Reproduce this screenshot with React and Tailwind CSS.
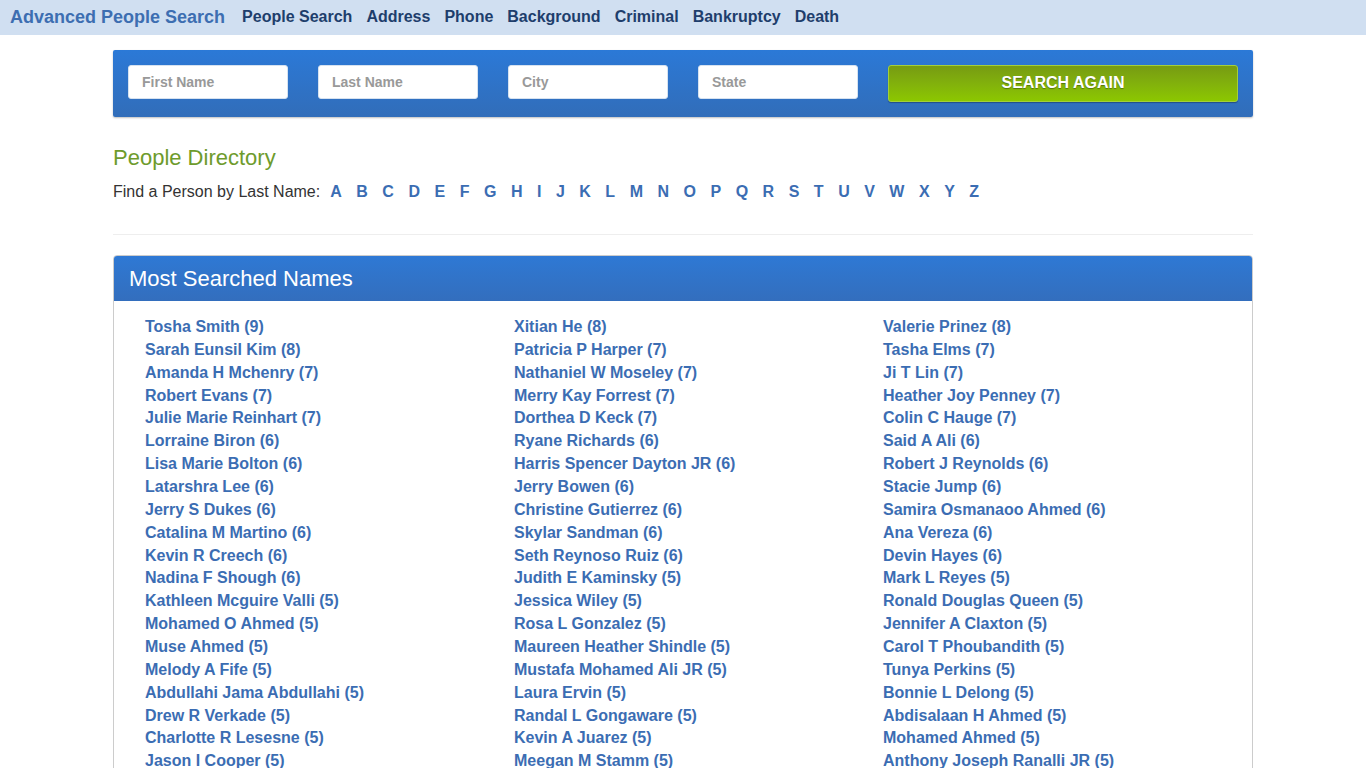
import React from 'react';

const navLinks = ['People Search', 'Address', 'Phone', 'Background', 'Criminal', 'Bankruptcy', 'Death'];

const letters = 'ABCDEFGHIJKLMNOPQRSTUVWXYZ'.split('');

const columns = [
  [
    'Tosha Smith (9)',
    'Sarah Eunsil Kim (8)',
    'Amanda H Mchenry (7)',
    'Robert Evans (7)',
    'Julie Marie Reinhart (7)',
    'Lorraine Biron (6)',
    'Lisa Marie Bolton (6)',
    'Latarshra Lee (6)',
    'Jerry S Dukes (6)',
    'Catalina M Martino (6)',
    'Kevin R Creech (6)',
    'Nadina F Shough (6)',
    'Kathleen Mcguire Valli (5)',
    'Mohamed O Ahmed (5)',
    'Muse Ahmed (5)',
    'Melody A Fife (5)',
    'Abdullahi Jama Abdullahi (5)',
    'Drew R Verkade (5)',
    'Charlotte R Lesesne (5)',
    'Jason I Cooper (5)',
  ],
  [
    'Xitian He (8)',
    'Patricia P Harper (7)',
    'Nathaniel W Moseley (7)',
    'Merry Kay Forrest (7)',
    'Dorthea D Keck (7)',
    'Ryane Richards (6)',
    'Harris Spencer Dayton JR (6)',
    'Jerry Bowen (6)',
    'Christine Gutierrez (6)',
    'Skylar Sandman (6)',
    'Seth Reynoso Ruiz (6)',
    'Judith E Kaminsky (5)',
    'Jessica Wiley (5)',
    'Rosa L Gonzalez (5)',
    'Maureen Heather Shindle (5)',
    'Mustafa Mohamed Ali JR (5)',
    'Laura Ervin (5)',
    'Randal L Gongaware (5)',
    'Kevin A Juarez (5)',
    'Meegan M Stamm (5)',
  ],
  [
    'Valerie Prinez (8)',
    'Tasha Elms (7)',
    'Ji T Lin (7)',
    'Heather Joy Penney (7)',
    'Colin C Hauge (7)',
    'Said A Ali (6)',
    'Robert J Reynolds (6)',
    'Stacie Jump (6)',
    'Samira Osmanaoo Ahmed (6)',
    'Ana Vereza (6)',
    'Devin Hayes (6)',
    'Mark L Reyes (5)',
    'Ronald Douglas Queen (5)',
    'Jennifer A Claxton (5)',
    'Carol T Phoubandith (5)',
    'Tunya Perkins (5)',
    'Bonnie L Delong (5)',
    'Abdisalaan H Ahmed (5)',
    'Mohamed Ahmed (5)',
    'Anthony Joseph Ranalli JR (5)',
  ],
];

const SearchInput = ({ placeholder }) => (
  <input
    type="text"
    placeholder={placeholder}
    className="w-[160px] h-[34px] rounded-[3px] bg-white px-[13px] text-[14px] font-bold text-[#555] placeholder:text-[#999] outline-none border border-[#d6e2f0]"
  />
);

const App = () => {
  return (
    <div className="min-h-screen bg-white font-['Liberation_Sans',Arial,sans-serif] text-[#333]">
      {/* top bar */}
      <div className="h-[35px] bg-[#d0dff1] flex items-center px-[10px] pb-[1px]">
        <a href="#" className="text-[18px] font-bold text-[#3d6eb1] mr-[17px]">
          Advanced People Search
        </a>
        <nav className="flex items-center gap-[14px]">
          {navLinks.map((link) => (
            <a key={link} href="#" className="text-[16px] font-bold text-[#1e3e6c]">
              {link}
            </a>
          ))}
        </nav>
      </div>

      <div className="w-[1140px] mx-auto">
        {/* search form */}
        <div className="mt-[15px] h-[67px] rounded-[2px] bg-gradient-to-b from-[#2b79d7] to-[#316db9] shadow-[0_1px_2px_rgba(0,0,0,0.25)] px-[15px] flex items-center">
          <div className="flex items-start gap-[30px]">
            <SearchInput placeholder="First Name" />
            <SearchInput placeholder="Last Name" />
            <SearchInput placeholder="City" />
            <SearchInput placeholder="State" />
            <button className="w-[350px] h-[37px] pb-[2px] rounded-[3px] border border-[#a3cf3a] bg-gradient-to-b from-[#779b12] to-[#8cc700] text-white text-[16px] font-bold [text-shadow:0_1px_1px_rgba(0,0,0,0.35)] shadow-[0_1px_1px_rgba(0,0,0,0.3)]">
              SEARCH AGAIN
            </button>
          </div>
        </div>

        {/* directory */}
        <div className="pt-[29px] pb-[31px] border-b border-[#eee]">
          <h2 className="text-[22px] leading-[24px] text-[#6e9b2c]">People Directory</h2>
          <div className="mt-[11px] flex items-center text-[16px] leading-[22px]">
            <span className="mr-[10px]">Find a Person by Last Name:</span>
            <div className="flex items-center gap-[14.5px]">
              {letters.map((l) => (
                <a key={l} href="#" className="font-bold text-[#3b6db3]">
                  {l}
                </a>
              ))}
            </div>
          </div>
        </div>

        {/* most searched */}
        <div className="mt-[20px] rounded-[4px] border border-[#ccc] overflow-hidden">
          <div className="h-[46px] -m-px mb-0 rounded-t-[4px] bg-gradient-to-b from-[#2e79d5] to-[#336ebd] flex items-center px-[16px]">
            <h3 className="text-[22px] text-white">Most Searched Names</h3>
          </div>
          <div className="grid grid-cols-[369px_369px_369px] pl-[31px] pt-[15px] pb-[20px]">
            {columns.map((col, i) => (
              <ul key={i}>
                {col.map((name) => (
                  <li key={name} className="text-[16px] leading-[22.857px] font-bold">
                    <a href="#" className="text-[#3b6db3]">
                      {name}
                    </a>
                  </li>
                ))}
              </ul>
            ))}
          </div>
        </div>
      </div>
    </div>
  );
};

export default App;
